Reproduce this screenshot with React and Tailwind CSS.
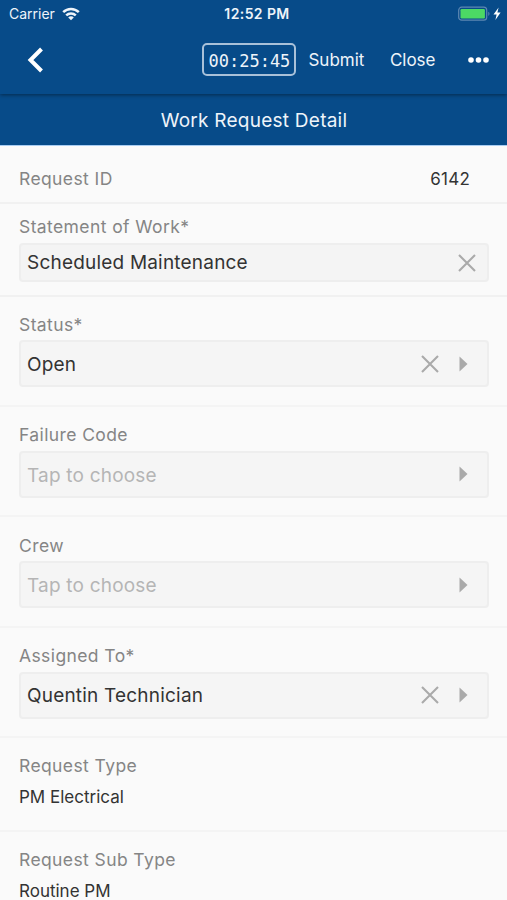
const fields = [
  { label: 'Status*', value: 'Open' },
  { label: 'Failure Code' },
  { label: 'Crew' },
  { label: 'Assigned To*', value: 'Quentin Technician' },
];

const WifiIcon = () => (
  <svg width="18" height="14" viewBox="0 0 18 14" fill="none" stroke="#eef4fa" strokeWidth="2.5">
    <path d="M1.2 5.2C5.6.9 12.4.9 16.8 5.2" />
    <path d="M4.2 8.4c2.7-2.6 6.9-2.6 9.6 0" />
    <path d="M9 13.2 6.2 10.4c1.6-1.4 4-1.4 5.6 0Z" fill="#eef4fa" stroke="none" />
  </svg>
);

const BatteryIcon = () => (
  <svg width="44" height="16" viewBox="0 0 44 16" fill="none">
    <rect x="0.7" y="1.2" width="28" height="13" rx="3" stroke="#5e88b2" strokeWidth="1.2" />
    <rect x="2.5" y="3" width="24.4" height="9.4" rx="1.2" fill="#4cd964" />
    <path d="M30.3 5.7c1.6.6 1.6 3.6 0 4.2Z" fill="#5e88b2" />
    <path d="M40.6 1.4 35.5 8.6h3.1l-1.2 5.3 5.2-7.4h-3.2Z" fill="#fff" />
  </svg>
);

const ClearIcon = () => (
  <svg width="18" height="18" viewBox="0 0 18 18" stroke="#aaa" strokeWidth="2.1">
    <path d="M1 1 17 17M17 1 1 17" />
  </svg>
);

const ArrowIcon = () => (
  <svg width="9" height="16" viewBox="0 0 9 16" fill="#aaa">
    <path d="M.5.5 8.5 8l-8 7.5Z" />
  </svg>
);

const PickerField = ({ label, value }) => (
  <div className="h-[110.4px] border-b-2 border-[#f4f4f4] pr-[18px] pl-[19px] pt-[17.3px]">
    <div className="h-[26.7px] text-[17.5px] leading-[22px] tracking-[0.4px] text-[#858585]">{label}</div>
    <button
      type="button"
      className="flex h-[47px] w-full items-center rounded-[4px] border-2 border-[#eeeeee] bg-[#f5f5f5] pr-[19px] pl-1.5 text-left text-[19px] tracking-[0.2px]"
    >
      {value ? (
        <span className="flex-1 pt-[3px] text-[#333]">{value}</span>
      ) : (
        <span className="flex-1 pt-[3px] text-[#b5b5b5]">Tap to choose</span>
      )}
      <span className="flex items-center gap-5">
        {value && <ClearIcon />}
        <ArrowIcon />
      </span>
    </button>
  </div>
);

const ReadOnlyField = ({ label, value }) => (
  <div className="h-[94px] shrink-0 border-b-2 border-[#f4f4f4] px-[19px] pt-[17px]">
    <div className="text-[17.5px] leading-[22px] tracking-[0.4px] text-[#858585]">{label}</div>
    <div className="mt-[9px] text-[17px] leading-[22px] text-[#333]">{value}</div>
  </div>
);

export default function App() {
  return (
    <div className="h-[900px] w-[507px] overflow-hidden bg-[#fafafa] font-['Inter',sans-serif]">
      <header className="relative h-[94px] bg-[#074b89] text-[#eef4fa] shadow-[0_1px_4px_rgba(0,0,0,0.45)]">
        {/* Status bar */}
        <div className="grid h-[27px] grid-cols-3 items-center pr-[5px] pl-[9px]">
          <div className="flex items-center gap-[7px] text-[14px]">
            Carrier
            <WifiIcon />
          </div>
          <div className="pl-[3px] text-center text-[14px] font-semibold tracking-[0.4px]">12:52 PM</div>
          <div className="flex justify-end">
            <BatteryIcon />
          </div>
        </div>

        {/* Toolbar */}
        <div className="flex h-[65px] items-center pr-[18.5px] pl-[27px]">
          <button type="button" aria-label="Back">
            <svg width="17" height="26" viewBox="0 0 17 26" fill="none" stroke="#fff" strokeWidth="4">
              <path d="M14.5 2 3.5 13l11 11" />
            </svg>
          </button>
          <div className="mr-[12px] ml-auto flex h-[33px] w-[94px] items-center justify-center rounded-[5px] border-2 border-[#a9c1d9] pt-[4px] font-['DejaVu_Sans_Mono',monospace] text-[17px]">
            00:25:45
          </div>
          <button type="button" className="mr-[25.5px] pt-0.5 text-[17px]">Submit</button>
          <button type="button" className="mr-[32px] pt-0.5 text-[17px]">Close</button>
          <button type="button" aria-label="More">
            <svg width="21" height="6" viewBox="0 0 21 6" fill="#fff">
              <circle cx="3" cy="3" r="2.8" />
              <circle cx="10.5" cy="3" r="2.8" />
              <circle cx="18" cy="3" r="2.8" />
            </svg>
          </button>
        </div>
      </header>

      <h1 className="flex h-[52px] items-center justify-center border-b border-[#a9cdf2] bg-[#074b89] pt-[3px] pl-px text-[19px] tracking-[0.25px] text-[#eef4fa]">
        Work Request Detail
      </h1>

      <div className="flex h-[58px] items-center justify-between border-b-2 border-[#f1f1f1] pt-[11px] pr-[37px] pl-[19px]">
        <span className="text-[17.5px] tracking-[0.4px] text-[#858585]">Request ID</span>
        <span className="text-[17px] tracking-[0.25px] text-[#333]">6142</span>
      </div>

      <div className="h-[92.5px] border-b-2 border-[#f1f1f1] pr-[18px] pl-[19px] pt-3">
        <div className="h-[27px] text-[17.5px] leading-[22px] tracking-[0.4px] text-[#858585]">Statement of Work*</div>
        <div className="flex h-[39px] items-center justify-between rounded-[4px] border-2 border-[#eeeeee] bg-[#f4f4f4] pr-[11px] pl-1.5 text-[19px] tracking-[0.2px] text-[#333]">
          <span className="pt-0.5">Scheduled Maintenance</span>
          <ClearIcon />
        </div>
      </div>

      {fields.map((field) => (
        <PickerField key={field.label} {...field} />
      ))}

      <ReadOnlyField label="Request Type" value="PM Electrical" />
      <ReadOnlyField label="Request Sub Type" value="Routine PM" />
    </div>
  );
}
